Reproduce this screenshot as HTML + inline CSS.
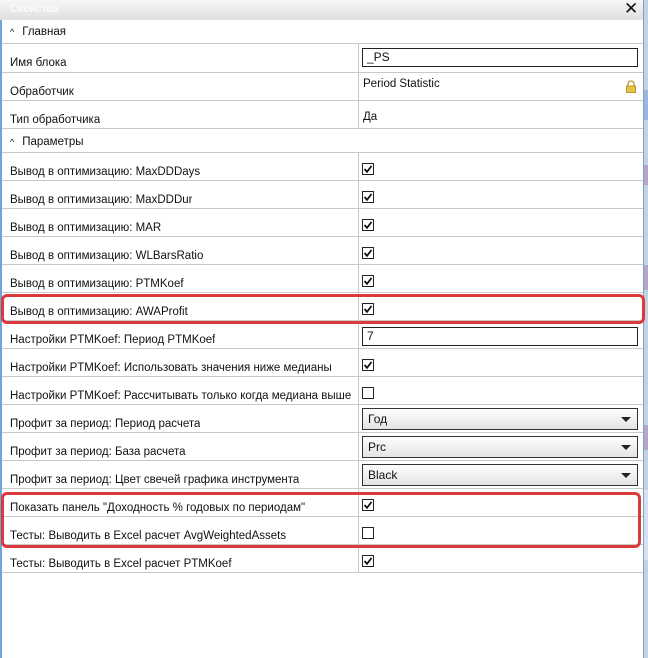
<!DOCTYPE html>
<html><head><meta charset="utf-8"><style>
*{margin:0;padding:0;box-sizing:border-box}
body{width:648px;height:658px;overflow:hidden;background:#fff;font-family:"Liberation Sans",sans-serif;font-size:11.5px;color:#111;position:relative}
.a{position:absolute}
.line{position:absolute;left:2px;width:641px;height:1px;background:#c9c9c9}
.lab{position:absolute;left:10px;white-space:nowrap;max-width:345px;overflow:hidden;text-overflow:ellipsis;margin-top:2px}
.combo{position:absolute;left:362px;width:276px;height:22px;border:1px solid #333;background:linear-gradient(#fdfdfd,#e4e4e4);padding-left:5px;line-height:20px;font-size:12px}
.combo:after{content:"";position:absolute;right:6px;top:8px;border-left:5px solid transparent;border-right:5px solid transparent;border-top:5px solid #222}
.inp{position:absolute;left:362px;width:276px;height:19px;border:1px solid #222;background:#fff;padding-left:4px;line-height:17px;font-size:12px}
.red{position:absolute;border:3px solid #dc3a3a;border-radius:6px}
</style></head><body>
<div class="a" style="left:0;top:0;width:648px;height:20px;background:linear-gradient(#f6f6f6,#e0e0e0)"></div>
<div class="a" style="left:10px;top:3px;color:#fff;font-size:11px">Свойства</div>
<div class="a" style="left:624px;top:-1px;font-size:17px;font-weight:bold;color:#111;font-family:'DejaVu Sans',sans-serif">✕</div>
<div class="a" style="left:0;top:20px;width:2px;height:638px;background:#6fa6d8"></div>
<div class="a" style="left:643px;top:0;width:5px;height:658px;background:#c2d3e6"></div>
<div class="a" style="left:643px;top:0;width:1px;height:658px;background:#7fa0c8"></div>
<div class="a" style="left:644px;top:90px;width:4px;height:30px;background:#9ab8de"></div>
<div class="a" style="left:644px;top:165px;width:4px;height:20px;background:#b5a7cc"></div>
<div class="a" style="left:644px;top:265px;width:4px;height:25px;background:#b5a7cc"></div>
<div class="a" style="left:644px;top:425px;width:4px;height:25px;background:#b5a7cc"></div>
<div class="a" style="left:644px;top:490px;width:4px;height:70px;background:#d6e2ef"></div>

<div class="lab" style="top:24px"><span style="font-size:9px;margin-right:8px">^</span>Главная</div>
<div class="line" style="top:43px"></div>
<div class="a" style="left:358px;top:44px;width:1px;height:85px;background:#c9c9c9"></div>
<div class="lab" style="top:55px">Имя блока</div>
<div class="inp" style="top:48px">_PS</div>
<div class="line" style="top:72px"></div>
<div class="lab" style="top:84px">Обработчик</div>
<div class="a" style="left:363px;top:78px">Period Statistic</div>
<div class="a" style="left:626px;top:80px;width:10px;height:13px">
<svg width="10" height="13"><path d="M2 6V4a3 3 0 0 1 6 0v2" fill="none" stroke="#b89a2e" stroke-width="1.3"/><rect x="0.5" y="6" width="9" height="6.5" fill="#e3c34a" stroke="#b89a2e"/></svg></div>
<div class="line" style="top:100px"></div>
<div class="lab" style="top:112px">Тип обработчика</div>
<div class="a" style="left:363px;top:111px">Да</div>
<div class="line" style="top:128px"></div>
<div class="lab" style="top:134px"><span style="font-size:9px;margin-right:8px">^</span>Параметры</div>
<div class="line" style="top:152px"></div>
<div class="a" style="left:358px;top:153px;width:1px;height:420px;background:#c9c9c9"></div>

<div class="lab" style="top:164px">Вывод в оптимизацию: MaxDDDays</div>
<div class="line" style="top:180px"></div>
<div class="lab" style="top:192px">Вывод в оптимизацию: MaxDDDur</div>
<div class="line" style="top:208px"></div>
<div class="lab" style="top:220px">Вывод в оптимизацию: MAR</div>
<div class="line" style="top:236px"></div>
<div class="lab" style="top:248px">Вывод в оптимизацию: WLBarsRatio</div>
<div class="line" style="top:264px"></div>
<div class="lab" style="top:276px">Вывод в оптимизацию: PTMKoef</div>
<div class="line" style="top:292px"></div>
<div class="lab" style="top:304px">Вывод в оптимизацию: AWAProfit</div>
<div class="line" style="top:320px"></div>
<div class="lab" style="top:332px">Настройки PTMKoef: Период PTMKoef</div>
<div class="inp" style="top:327px">7</div>
<div class="line" style="top:348px"></div>
<div class="lab" style="top:360px">Настройки PTMKoef: Использовать значения ниже медианы</div>
<div class="line" style="top:376px"></div>
<div class="lab" style="top:388px">Настройки PTMKoef: Рассчитывать только когда медиана выше</div>
<div class="line" style="top:404px"></div>
<div class="lab" style="top:416px">Профит за период: Период расчета</div>
<div class="combo" style="top:408px">Год</div>
<div class="line" style="top:432px"></div>
<div class="lab" style="top:444px">Профит за период: База расчета</div>
<div class="combo" style="top:436px">Prc</div>
<div class="line" style="top:460px"></div>
<div class="lab" style="top:472px">Профит за период: Цвет свечей графика инструмента</div>
<div class="combo" style="top:464px">Black</div>
<div class="line" style="top:488px"></div>
<div class="lab" style="top:500px">Показать панель "Доходность % годовых по периодам"</div>
<div class="line" style="top:516px"></div>
<div class="lab" style="top:528px">Тесты: Выводить в Excel расчет AvgWeightedAssets</div>
<div class="line" style="top:544px"></div>
<div class="lab" style="top:556px">Тесты: Выводить в Excel расчет PTMKoef</div>
<div class="line" style="top:572px"></div>

<svg class="a" style="left:0;top:0" width="648" height="658">
<defs><g id="c"><rect x="0.5" y="0.5" width="11" height="11" fill="#fff" stroke="#222"/><path d="M2.5 6l2.5 2.8L9.5 3" fill="none" stroke="#111" stroke-width="1.8"/></g>
<g id="e"><rect x="0.5" y="0.5" width="11" height="11" fill="#fff" stroke="#222"/></g></defs>
<use href="#c" x="362" y="163"/>
<use href="#c" x="362" y="191"/>
<use href="#c" x="362" y="219"/>
<use href="#c" x="362" y="247"/>
<use href="#c" x="362" y="275"/>
<use href="#c" x="362" y="303"/>
<use href="#c" x="362" y="359"/>
<use href="#e" x="362" y="387"/>
<use href="#c" x="362" y="499"/>
<use href="#e" x="362" y="527"/>
<use href="#c" x="362" y="555"/>
</svg>

<div class="red" style="left:1px;top:294px;width:644px;height:30px"></div>
<div class="red" style="left:1px;top:492px;width:640px;height:56px"></div>
</body></html>
